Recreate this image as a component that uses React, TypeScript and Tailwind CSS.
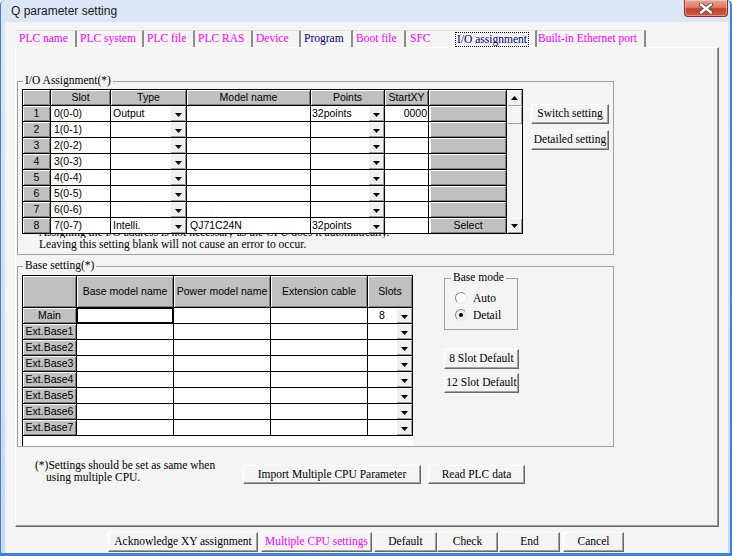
import React from 'react';

const SERIF = "font-['Liberation_Serif',serif] text-[11.5px]";
const SANS = "font-['Liberation_Sans',Arial,sans-serif] text-[10.5px]";
const RAISED = 'shadow-[inset_1px_1px_0_#fff,inset_-1px_-1px_0_#808080]';
const LIGHT_RAISED = 'shadow-[inset_1px_1px_0_#fff,inset_-1px_-1px_0_#a0a0a0]';
const HEAD = `flex items-center justify-center bg-[#c0c0c0] border-r border-b border-black ${RAISED}`;
const CELL = 'flex items-center overflow-hidden whitespace-nowrap border-r border-b border-black bg-white';

type Tab = { label: string; w: string; pad: string; sep: boolean; navy?: boolean; focus?: boolean };

const tabs: Tab[] = [
  { label: 'PLC name', w: 'w-[61px]', pad: 'pl-[3px]', sep: true },
  { label: 'PLC system', w: 'w-[67px]', pad: 'pl-[3px]', sep: true },
  { label: 'PLC file', w: 'w-[51px]', pad: 'pl-[3px]', sep: true },
  { label: 'PLC RAS', w: 'w-[58px]', pad: 'pl-[3px]', sep: true },
  { label: 'Device', w: 'w-[48px]', pad: 'pl-[3px]', sep: true },
  { label: 'Program', w: 'w-[52px]', pad: 'pl-[3px]', sep: true, navy: true },
  { label: 'Boot file', w: 'w-[53px]', pad: 'pl-[3px]', sep: true },
  { label: 'SFC', w: 'w-[47px]', pad: 'pl-[4px]', sep: false },
  { label: 'I/O assignment', w: 'w-[84px]', pad: 'pl-[2px]', sep: true, navy: true, focus: true },
  { label: 'Built-in Ethernet port', w: 'w-[109px]', pad: 'pl-[1px]', sep: true },
];

type IoRow = { slot: string; type?: string; model?: string; points?: string; start?: string; btn?: string };

const ioRows: IoRow[] = [
  { slot: '0(0-0)', type: 'Output', points: '32points', start: '0000' },
  { slot: '1(0-1)' },
  { slot: '2(0-2)' },
  { slot: '3(0-3)' },
  { slot: '4(0-4)' },
  { slot: '5(0-5)' },
  { slot: '6(0-6)' },
  { slot: '7(0-7)', type: 'Intelli.', model: 'QJ71C24N', points: '32points', btn: 'Select' },
];

const baseRows = [
  { name: 'Main', slots: '8' },
  { name: 'Ext.Base1' },
  { name: 'Ext.Base2' },
  { name: 'Ext.Base3' },
  { name: 'Ext.Base4' },
  { name: 'Ext.Base5' },
  { name: 'Ext.Base6' },
  { name: 'Ext.Base7' },
];

function DropArrow() {
  return (
    <div className={`flex h-full w-[16px] shrink-0 items-center justify-center bg-[#f0f0f0] ${LIGHT_RAISED}`}>
      <svg width="7" height="4" viewBox="0 0 7 4" className="mt-[2px]">
        <path d="M0 0H7L3.5 4Z" fill="#000" />
      </svg>
    </div>
  );
}

function WinButton({
  className = '',
  magenta = false,
  children,
}: {
  className?: string;
  magenta?: boolean;
  children: React.ReactNode;
}) {
  return (
    <button
      type="button"
      className={`flex shrink-0 items-center justify-center whitespace-nowrap border border-t-white border-l-white border-r-[#696969] border-b-[#696969] bg-[#f4f4f4] leading-none shadow-[inset_-1px_-1px_0_#a0a0a0] ${SERIF} ${
        magenta ? 'text-[#ff00ff]' : 'text-black'
      } ${className}`}
    >
      {children}
    </button>
  );
}

function GroupLabel({ className = '', children }: { className?: string; children: React.ReactNode }) {
  return (
    <span className={`absolute -top-[8px] bg-[#f4f4f4] px-[2px] leading-[13px] text-black ${SERIF} ${className}`}>
      {children}
    </span>
  );
}

function Radio({ checked = false }: { checked?: boolean }) {
  return (
    <span
      className={`flex h-[12px] w-[12px] items-center justify-center rounded-full border border-t-[#8a8a8a] border-l-[#8a8a8a] border-r-[#e6e6e6] border-b-[#e6e6e6] ${
        checked ? 'bg-[#ececec]' : 'bg-white'
      }`}
    >
      {checked && <span className="h-[4px] w-[4px] rounded-full bg-black" />}
    </span>
  );
}

function IoGrid() {
  return (
    <div className={`flex w-[501px] border-t border-l border-black bg-white text-black ${SANS}`}>
      <div className="flex w-[484px] flex-col">
        <div className="flex h-[16px]">
          <div className={`w-[28px] ${HEAD}`} />
          <div className={`w-[60px] ${HEAD}`}>Slot</div>
          <div className={`w-[76px] ${HEAD}`}>Type</div>
          <div className={`w-[124px] ${HEAD}`}>Model name</div>
          <div className={`w-[74px] ${HEAD}`}>Points</div>
          <div className={`w-[44px] ${HEAD}`}>StartXY</div>
          <div className={`w-[78px] ${HEAD}`} />
        </div>
        {ioRows.map((r, i) => (
          <div key={r.slot} className="flex h-[16px]">
            <div className={`w-[28px] ${HEAD}`}>{i + 1}</div>
            <div className={`w-[60px] ${CELL} bg-[#c0c0c0] pl-[3px]`}>{r.slot}</div>
            <div className={`w-[76px] ${CELL}`}>
              <span className="flex-1 pl-[2px]">{r.type}</span>
              <DropArrow />
            </div>
            <div className={`w-[124px] ${CELL} pl-[3px]`}>{r.model}</div>
            <div className={`w-[74px] ${CELL}`}>
              <span className="flex-1 pl-[1px]">{r.points}</span>
              <DropArrow />
            </div>
            <div className={`w-[44px] ${CELL} justify-end pr-[1px]`}>{r.start}</div>
            <div className={`w-[78px] ${CELL} pl-[1px]`}>
              <div className={`flex h-full w-full items-center justify-center bg-[#c0c0c0] ${RAISED}`}>{r.btn}</div>
            </div>
          </div>
        ))}
      </div>
      <div className="flex w-[16px] flex-col border-r border-b border-black bg-[#f4f4f4]">
        <div className={`flex h-[16px] items-center justify-center bg-[#f0f0f0] ${LIGHT_RAISED}`}>
          <svg width="7" height="4" viewBox="0 0 7 4">
            <path d="M0 4H7L3.5 0Z" fill="#000" />
          </svg>
        </div>
        <div className={`h-[18px] bg-[#f4f4f4] ${LIGHT_RAISED}`} />
        <div className="flex-1" />
        <div className={`flex h-[15px] items-center justify-center bg-[#f0f0f0] ${LIGHT_RAISED}`}>
          <svg width="7" height="4" viewBox="0 0 7 4">
            <path d="M0 0H7L3.5 4Z" fill="#000" />
          </svg>
        </div>
      </div>
    </div>
  );
}

function BaseGrid() {
  return (
    <div className={`flex w-[391px] flex-col border-t border-l border-black bg-white text-black ${SANS}`}>
      <div className="flex h-[32px]">
        <div className={`w-[54px] ${HEAD}`} />
        <div className={`w-[97px] ${HEAD}`}>Base model name</div>
        <div className={`w-[97px] ${HEAD}`}>Power model name</div>
        <div className={`w-[97px] ${HEAD}`}>Extension cable</div>
        <div className={`w-[45px] ${HEAD}`}>Slots</div>
      </div>
      {baseRows.map((r, i) => (
        <div key={r.name} className="flex h-[16px]">
          <div className={`w-[54px] ${HEAD}`}>{r.name}</div>
          <div className={`w-[97px] ${CELL} ${i === 0 ? 'shadow-[inset_0_0_0_1px_#000]' : ''}`} />
          <div className={`w-[97px] ${CELL}`} />
          <div className={`w-[97px] ${CELL}`} />
          <div className={`w-[45px] ${CELL}`}>
            <span className="flex-1 text-center">{r.slots}</span>
            <DropArrow />
          </div>
        </div>
      ))}
    </div>
  );
}

function CloseButton() {
  return (
    <div className="mr-[2px] flex h-[17px] w-[44px] items-center justify-center self-start rounded-b-[4px] border border-t-0 border-[#8a3326] bg-[linear-gradient(to_bottom,#eaa597_0%,#dc7c68_45%,#c5422b_55%,#d0583e_100%)] shadow-[inset_0_0_0_1px_rgba(255,255,255,0.35)]">
      <svg width="16" height="11" viewBox="0 0 16 11">
        <path d="M3 1.5L13 9.5M13 1.5L3 9.5" stroke="#5a4a48" strokeWidth="4.2" strokeLinecap="round" />
        <path d="M3 1.5L13 9.5M13 1.5L3 9.5" stroke="#fff" strokeWidth="2.4" strokeLinecap="round" />
      </svg>
    </div>
  );
}

export default function App() {
  return (
    <div className="flex h-[556px] w-[732px] flex-col overflow-hidden rounded-t-[5px] border-l border-r-2 border-b-[3px] border-[#3f82d6] bg-gradient-to-b from-[#dde6f7] to-[#cad8f1]">
      {/* title bar */}
      <div className="flex h-[22px] shrink-0 items-center justify-between">
        <span className="pl-[10px] font-['Liberation_Sans',Arial,sans-serif] text-[12px] text-[#1a1a1a]">
          Q parameter setting
        </span>
        <CloseButton />
      </div>

      {/* client area */}
      <div className="ml-[4px] flex h-[531px] w-[723px] flex-col bg-[#f4f4f4] pt-[8px] pl-[10px]">
        {/* tabs */}
        <div className="ml-[1px] flex h-[17px]">
          {tabs.map((t) => (
            <div
              key={t.label}
              className={`flex h-[17px] items-center border-t border-t-[#e2e2e2] ${t.w} ${t.pad} ${
                t.sep ? 'border-r-2 border-r-[#8c8c8c]' : ''
              } ${SERIF} ${t.navy ? 'text-[#000080]' : 'text-[#ff00ff]'}`}
            >
              {t.focus ? (
                <span className="border border-dotted border-black px-[1px] leading-[13px]">{t.label}</span>
              ) : (
                t.label
              )}
            </div>
          ))}
        </div>

        {/* tab panel */}
        <div className="flex h-[480px] w-[704px] flex-col border border-t-white border-l-white border-r-[#696969] border-b-[#696969] pt-[33px] pl-[1px] shadow-[inset_-1px_-1px_0_#a0a0a0]">
          {/* I/O assignment */}
          <div className="relative flex h-[174px] w-[597px] border border-[#a0a0a0] pt-[7px] pl-[4px]">
            <GroupLabel className="left-[5px]">I/O Assignment(*)</GroupLabel>
            <div className="flex flex-col">
              <IoGrid />
              <div className={`ml-[17px] leading-[12px] whitespace-nowrap text-black ${SERIF}`}>
                {/* first line is mostly hidden behind the grid, only its foot shows */}
                <div className="h-[4px] overflow-hidden">
                  <div className="-mt-[8px]">
                    Assigning the I/O address is not necessary as the CPU does it automatically.
                  </div>
                </div>
                <div>Leaving this setting blank will not cause an error to occur.</div>
              </div>
            </div>
            <div className="mt-[15px] ml-[8px] flex flex-col gap-[6px]">
              <WinButton className="h-[20px] w-[78px]">Switch setting</WinButton>
              <WinButton className="h-[20px] w-[78px]">Detailed setting</WinButton>
            </div>
          </div>

          {/* Base setting */}
          <div className="relative mt-[11px] flex h-[181px] w-[597px] border border-[#a0a0a0] pt-[8px] pl-[4px]">
            <GroupLabel className="left-[5px]">Base setting(*)</GroupLabel>
            <BaseGrid />
            <div className="ml-[31px] flex flex-col">
              <div className="relative mt-[3px] h-[52px] w-[74px] border border-[#a0a0a0] pt-[13px] pl-[10px]">
                <GroupLabel className="left-[6px]">Base mode</GroupLabel>
                <div className={`flex flex-col gap-[5px] text-black ${SERIF}`}>
                  <label className="flex h-[12px] items-center gap-[6px] leading-[12px]">
                    <Radio />
                    Auto
                  </label>
                  <label className="flex h-[12px] items-center gap-[6px] leading-[12px]">
                    <Radio checked />
                    Detail
                  </label>
                </div>
              </div>
              <WinButton className="mt-[19px] h-[20px] w-[75px]">8 Slot Default</WinButton>
              <WinButton className="mt-[4px] h-[20px] w-[75px]">12 Slot Default</WinButton>
            </div>
          </div>

          {/* notes + import */}
          <div className="mt-[12px] ml-[18px] flex">
            <div className={`w-[208px] leading-[12px] text-black ${SERIF}`}>
              <div>(*)Settings should be set as same when</div>
              <div className="pl-[11px]">using multiple CPU.</div>
            </div>
            <WinButton className="mt-[6px] h-[19px] w-[178px]">Import Multiple CPU Parameter</WinButton>
            <WinButton className="mt-[6px] ml-[7px] h-[19px] w-[97px]">Read PLC data</WinButton>
          </div>
        </div>

        {/* bottom buttons */}
        <div className="mt-[5px] flex h-[20px]">
          <WinButton className="ml-[93px] h-[20px] w-[150px]">Acknowledge XY assignment</WinButton>
          <WinButton magenta className="ml-[3px] h-[20px] w-[111px]">
            Multiple CPU settings
          </WinButton>
          <WinButton className="ml-[2px] h-[20px] w-[63px]">Default</WinButton>
          <WinButton className="ml-[0px] h-[20px] w-[61px]">Check</WinButton>
          <WinButton className="ml-[1px] h-[20px] w-[61px]">End</WinButton>
          <WinButton className="ml-[3px] h-[20px] w-[61px]">Cancel</WinButton>
        </div>
      </div>
    </div>
  );
}
